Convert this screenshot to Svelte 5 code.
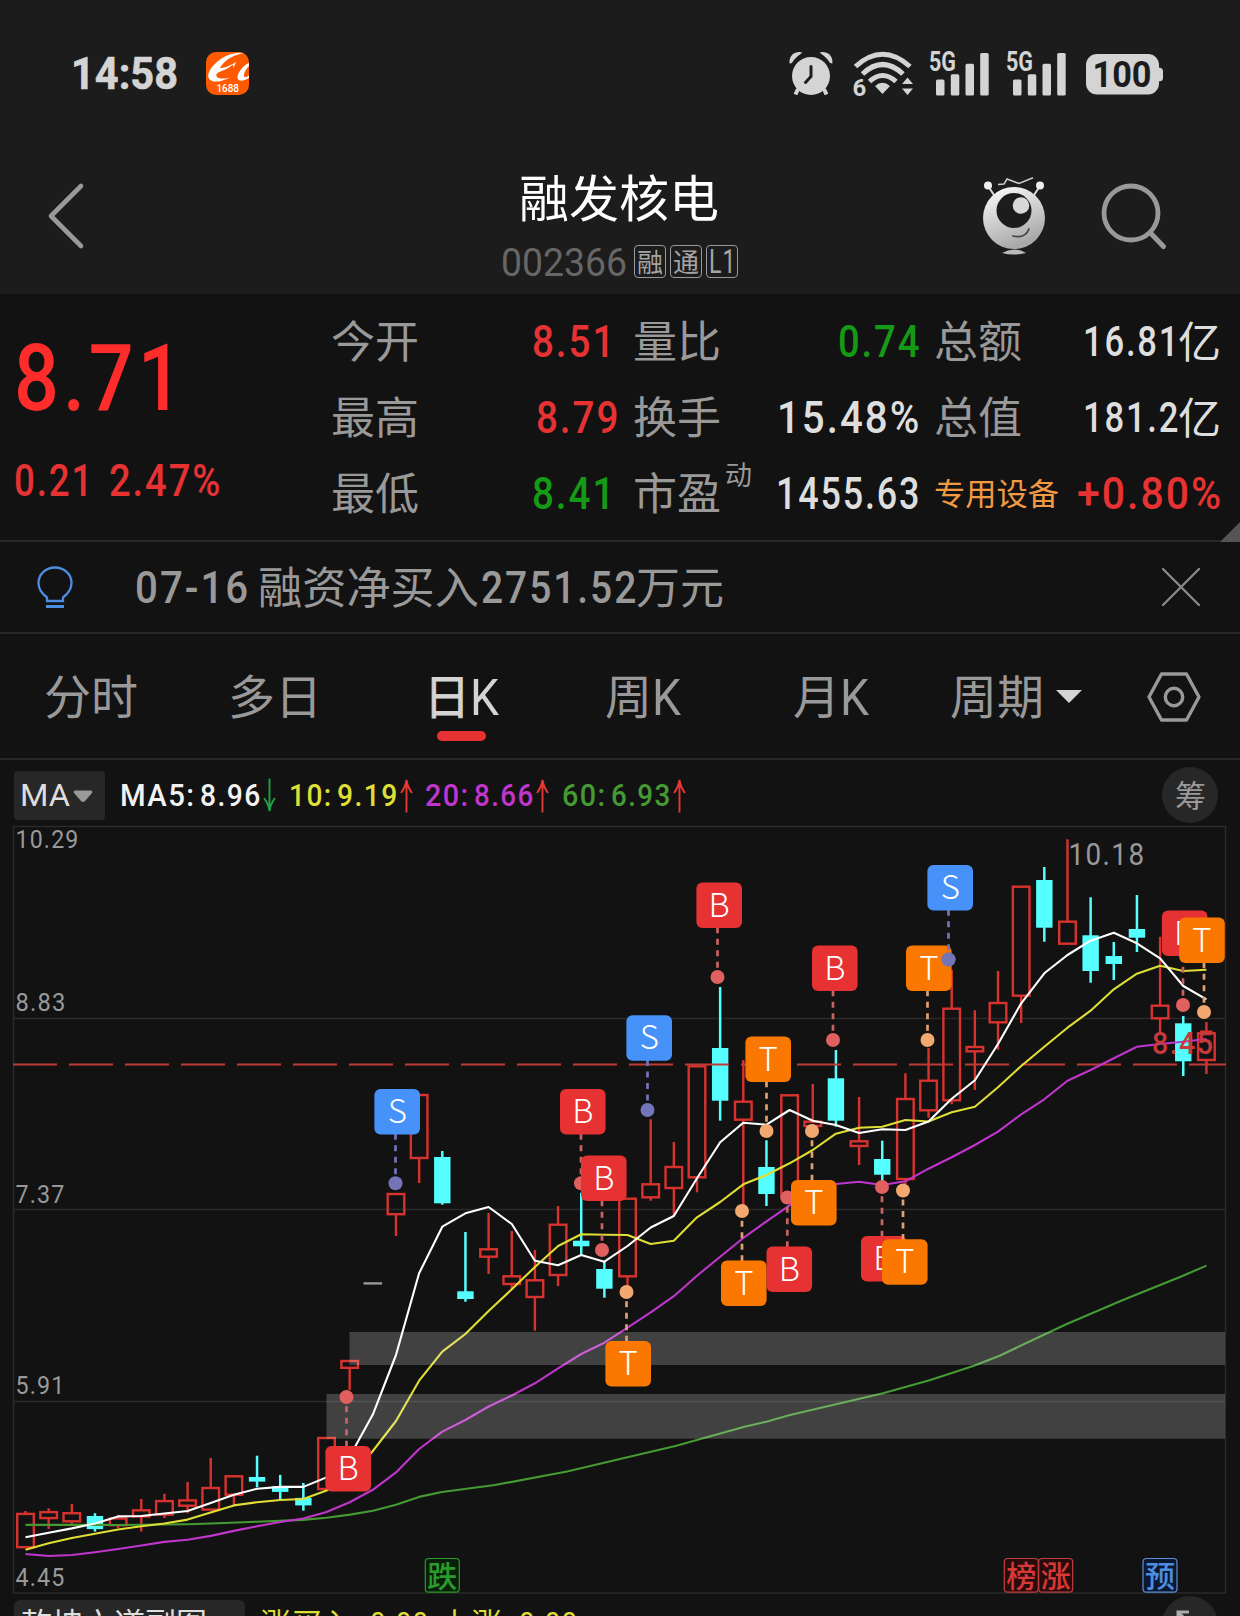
<script>
  const STEP = 23.155;
  const cx = (i) => 25.5 + STEP * i;

  // [direction, high, body top, body bottom, low]
  const candles = [
    ['u', 1511, 1513.9, 1547.2, 1547.2], ['u', 1508.2, 1512.1, 1518.1, 1529.1], ['u', 1504, 1513.2, 1521.3, 1523.8],
    ['d', 1513.2, 1516, 1529.1, 1531.6], ['u', 1515, 1518.5, 1525.2, 1528], ['u', 1499, 1510.3, 1516.4, 1531.6],
    ['u', 1493.7, 1501.1, 1514.6, 1518.1], ['u', 1482, 1500.4, 1505.7, 1513.2], ['u', 1457.9, 1488, 1509.6, 1510.3],
    ['u', 1474.9, 1476.3, 1494.7, 1505], ['d', 1455.7, 1477, 1481.6, 1487.3], ['d', 1474.9, 1486.2, 1491.9, 1500.8],
    ['d', 1483, 1497.9, 1505.4, 1510.7], ['u', 1438, 1438, 1489, 1489], ['u', 1361, 1361, 1367.8, 1390],
    ['f', 1283.4, 1283.4, 1283.4, 1283.4], ['u', 1194, 1194, 1214.2, 1236], ['u', 1095, 1095, 1158, 1183],
    ['d', 1151, 1157, 1203.3, 1204.7], ['d', 1232, 1291.3, 1299, 1301.7], ['u', 1213, 1249.3, 1256.7, 1274],
    ['u', 1231, 1276.3, 1284, 1290], ['u', 1250, 1280.3, 1297, 1330.7], ['u', 1206, 1224.7, 1275, 1286],
    ['d', 1192.7, 1240.7, 1246.3, 1254.7], ['d', 1262, 1269, 1288.7, 1297.7], ['u', 1198.7, 1198.7, 1276.3, 1287],
    ['u', 1119.3, 1184.3, 1197.3, 1200.7], ['u', 1142, 1167, 1188, 1216], ['u', 1066.3, 1066.3, 1177.3, 1192.3],
    ['d', 987, 1048, 1100.7, 1120.7], ['u', 1060, 1101.7, 1119.7, 1205], ['d', 1140.3, 1167, 1194, 1206],
    ['u', 1095.3, 1095.3, 1196, 1196], ['u', 1084, 1121.7, 1126, 1128], ['d', 1050, 1078.3, 1120.7, 1126.7],
    ['u', 1097, 1141.3, 1146, 1165], ['d', 1140.7, 1159, 1174.7, 1185], ['u', 1073.3, 1099, 1179, 1184],
    ['u', 1048, 1080.7, 1110.3, 1117.7], ['u', 970, 1008.7, 1100.3, 1104.3], ['u', 1010.3, 1047, 1051.3, 1090],
    ['u', 971, 1003, 1022.3, 1049.7], ['u', 886.7, 886.7, 995.7, 1023], ['d', 867, 880, 927.7, 941.7],
    ['u', 839.3, 921.7, 943.7, 943.7], ['d', 897.3, 935.3, 971, 982.7], ['d', 942, 956, 964, 980],
    ['d', 895, 929, 937.7, 952], ['u', 936.7, 1005.7, 1018.3, 1033], ['d', 1016, 1023.3, 1061.3, 1076],
    ['u', 1022, 1033.3, 1060, 1074]
  ];

  const ma5 = [1537.3, 1532.7, 1528.4, 1523.5, 1516.4, 1516, 1513.5, 1511, 1502.9, 1494.7, 1488.7, 1486.9, 1486.9, 1477.4, 1456.5, 1414.6, 1355, 1273.3, 1226.7, 1213.3, 1207, 1224, 1260.7, 1265.3, 1255, 1261.7, 1246, 1227.5, 1216, 1178.3, 1142.3, 1122.7, 1124.7, 1110, 1120.7, 1125, 1133, 1129.3, 1130, 1121.5, 1098.7, 1080.3, 1044, 1003.3, 973.3, 955, 940.7, 932.7, 943.3, 958.3, 986, 999.3];
  const ma10 = [1549.7, 1543.3, 1538, 1533.8, 1529.5, 1526.3, 1523.5, 1519.6, 1512.5, 1505.4, 1502.2, 1500, 1499, 1490.5, 1478, 1451, 1421, 1380.7, 1351.7, 1334, 1311, 1289.3, 1267, 1246, 1234.3, 1234.7, 1235, 1244, 1240.7, 1217.3, 1202, 1184.3, 1175, 1163.3, 1150, 1133.7, 1127.7, 1126.7, 1120, 1121.5, 1112.3, 1106.7, 1087.3, 1066, 1046.7, 1027.7, 1010.7, 989.3, 973.7, 965.7, 971, 969.7];
  const ma20 = [1554, 1556, 1555, 1552.2, 1549, 1545.5, 1541.9, 1539.8, 1535.9, 1530.9, 1526.3, 1522, 1518.5, 1512, 1502.2, 1489.8, 1472.4, 1449, 1431.6, 1420, 1406.5, 1395.5, 1383.3, 1368.3, 1354, 1342.7, 1327.7, 1312.3, 1296.2, 1275.7, 1256.7, 1238, 1221.3, 1205.3, 1190, 1184, 1181.7, 1185, 1181.3, 1168.7, 1157.3, 1145, 1131.7, 1114.3, 1099.3, 1080.7, 1070, 1058.3, 1046.7, 1044, 1041.7, 1039];
  const line = (ys) => ys.map((y, i) => `${cx(i).toFixed(1)},${y}`).join(' ');
  const ma60 = '25.5,1524.9 95,1524.9 118,1525 188,1524.2 211,1523.5 257,1521.7 303,1519.9 326.5,1517.8 350,1514.6 373,1510.7 396,1504.7 419,1496.9 442,1492 495,1485 567,1471.5 620,1459 675.4,1446 744.5,1426.7 766.3,1421.7 790,1415 883,1393.3 930.4,1380 974,1365.7 999.6,1355.7 1066.8,1324 1123,1300 1180,1277 1206.5,1265.6';

  // [letter, badge centre x, badge centre y, dot x, dot y]
  const markers = [
    ['B', 348.2, 1468.8, 346.5, 1397], ['S', 397.2, 1111.7, 395.5, 1183.3], ['B', 582.8, 1111.7, 581, 1183.3],
    ['B', 603.8, 1178.3, 602, 1250], ['T', 628.2, 1363.8, 626.5, 1292], ['S', 649.2, 1038, 647.5, 1110],
    ['B', 719.2, 905.2, 717.5, 977], ['T', 743.8, 1283.3, 742, 1211], ['T', 768.2, 1059.3, 766.5, 1131],
    ['B', 789.3, 1269.2, 787.3, 1197.5], ['T', 813.8, 1202.8, 812, 1131], ['B', 834.8, 968.2, 833, 1040],
    ['B', 883.8, 1258.8, 882, 1187], ['T', 904.8, 1262, 903, 1190.5], ['T', 928.8, 968.2, 927.5, 1040],
    ['S', 950.2, 887.8, 948.5, 959.5], ['B', 1184.7, 933.2, 1183, 1005], ['T', 1202, 940.2, 1204, 1012]
  ];
  const axis = [['10.29', 848, 64], ['8.83', 1010.5, 51], ['7.37', 1203, 50], ['5.91', 1393.7, 50], ['4.45', 1586, 50]];
  const events = [['跌', 425.3, 'green'], ['榜', 1004.3, 'red'], ['涨', 1038.7, 'red'], ['预', 1143, 'blue']];

  // label, value, width, colour, unit, right inset
  const stats = [
    [['今开', '8.51', 82, 'red', '', 5], ['量比', '0.74', 81, 'green', '', 1], ['总额', '16.81', 95, 'lite', '亿']],
    [['最高', '8.79', 82, 'red', '', 1], ['换手', '15.48%', 142, 'lite', '', 1], ['总值', '181.2', 95, 'lite', '亿']],
    [['最低', '8.41', 82, 'green', '', 5], ['市盈', '1455.63', 143, 'lite', '', 1], ['专用设备', '+0.80%', 144, 'red']]
  ];
  const averages = [
    ['MA5:', 74, '8.96', 60, 'c5', false], ['10:', 42, '9.19', 60, 'c10', true],
    ['20:', 43, '8.66', 59, 'c20', true], ['60:', 43, '6.93', 59, 'c60', true]
  ];
  const isHan = (s) => /[\u4e00-\u9fff]/.test(s);
  const TRACK = 0.05;
  const spaced = (s, cls) => /\d/.test(s) && cls !== 'time' && cls !== 'dim';
  const fit = (s, w, size, cls) => (spaced(s, cls) ? w + size * TRACK : w);
</script>

{#snippet t(text, w, size, cls = '')}
  <svg class="t {cls}" width={w} height={isHan(text) ? size : size * 0.711}>
    <text class:digits={spaced(text, cls)} y={isHan(text) ? size * 0.88 : size * 0.711} font-size={size} textLength={fit(text, w, size, cls)} lengthAdjust="spacingAndGlyphs">{text}</text>
  </svg>
{/snippet}

{#snippet signal()}
  <svg class="signal" width="61" height="45" viewBox="0 0 61 45">
    <text x="0" y="18.500" font-size="27" font-weight="700" textLength="27" lengthAdjust="spacingAndGlyphs">5G</text>
    <rect x="7" y="27.5" width="8.5" height="16" rx="1.5" /><rect x="21.8" y="22.3" width="8.5" height="21.2" rx="1.5" />
    <rect x="36.5" y="11.7" width="8.5" height="31.8" rx="1.5" /><rect x="51.2" y="1" width="8.5" height="42.5" rx="1.5" />
  </svg>
{/snippet}

<main>
  <header>
    <div class="status">
      {@render t('14:58', 107, 43.5, 'time')}
      <svg class="app" width="43" height="43" viewBox="0 0 43 43">
        <defs><clipPath id="tile"><rect width="43" height="43" rx="10" /></clipPath></defs>
        <g clip-path="url(#tile)">
          <rect width="43" height="43" fill="#ff5a00" />
          <path d="M38 1C24-1 9 8 3 20C0 28 6 31 15 29L25 25.500C17 27 9 27.500 10.500 22C13 19 21 18 27 12.500L27.500 16L30 10C22 15 17 16 14 16C19 7 28 3 38 1Z" fill="#fff" />
          <path d="M43 11C36 14 31 22 31.500 26C33 31 39 28 43 26V23.500C40 25.500 37.500 26 38 22.500C38.500 19 41 16 43 14Z" fill="#fff" />
          <text x="10.500" y="39.500" font-size="10.800" font-weight="500" textLength="22.500" lengthAdjust="spacingAndGlyphs" fill="#fff">1688</text>
        </g>
      </svg>
      <span class="grow"></span>
      <svg class="alarm" width="44" height="46" viewBox="0 0 44 46">
        <circle cx="22" cy="25" r="19" fill="#d4d4d4" />
        <path d="M9 38L6.500 43.500M35 38L37.500 43.500" class="lg" stroke-width="4" />
        <path d="M.6 12.500C-.5 3 8-.5 13.500 1.500C10 4 5 8 3 12Z M43.400 12.500C44.500 3 36-.5 30.500 1.500C34 4 39 8 41 12Z" fill="#d4d4d4" />
        <path d="M22 15.500V25.500L16.500 31.500" fill="none" stroke="#1c1c1c" stroke-width="3" stroke-linecap="round" />
      </svg>
      <svg class="wifi" width="60" height="46" viewBox="0 0 60 46">
        <path d="M2.500 15.500Q29.500-9 57 15.500M9.500 23Q29.500 4 50 23M16.500 30.500Q29.500 18.500 43 30.500" class="lg" stroke-width="5" />
        <path d="M29.500 43L22 35Q29.500 28.500 37 35Z M54.500 26.500L60 33H49Z M54.500 44L60 37.500H49Z" fill="#d4d4d4" />
        <text x="-.5" y="45" font-size="24" font-weight="700" fill="#d4d4d4" stroke="#1c1c1c" stroke-width="4" paint-order="stroke">6</text>
      </svg>
      {@render signal()}
      {@render signal()}
      <svg class="battery" width="77" height="41" viewBox="0 0 77 41">
        <rect width="73" height="40.500" rx="11" fill="#d4d4d4" /><path d="M72 13.500Q77 13.500 77 17V24Q77 27.500 72 27.500Z" fill="#d4d4d4" />
        <text x="6.500" y="33" font-size="36" font-weight="700" textLength="59" lengthAdjust="spacingAndGlyphs" fill="#1c1c1c">100</text>
      </svg>
    </div>

    <div class="titlebar">
      <svg class="back" width="40" height="66" viewBox="0 0 40 66"><path d="M34 3L4 33L34 63" fill="none" stroke="#999" stroke-width="4.600" stroke-linecap="round" stroke-linejoin="round" /></svg>
      <div class="name">
        {@render t('融发核电', 200, 50, 'white')}
        <div class="code">
          {@render t('002366', 126, 39, 'dim')}
          <span class="badge">{@render t('融', 26, 26)}</span><span class="badge">{@render t('通', 26, 26)}</span><span class="badge">{@render t('L1', 26, 34, 'time0')}</span>
        </div>
      </div>
      <svg class="robot" width="64" height="78" viewBox="0 0 64 78">
        <defs><linearGradient id="skin" x1="0" y1="0" x2=".4" y2="1"><stop offset="0" stop-color="#fff" /><stop offset="1" stop-color="#a9a9a9" /></linearGradient></defs>
        <path d="M6 9L12 18M58 9L52 18" stroke="#ddd" stroke-width="2" />
        <circle cx="6" cy="8.500" r="4" fill="#eee" /><circle cx="58" cy="8.500" r="4" fill="#eee" />
        <path d="M16 7.500L22 7L25 2L37 6.500L51 .8" fill="none" stroke="#ccc" stroke-width="1.500" />
        <circle cx="32" cy="41" r="31" fill="url(#skin)" />
        <circle cx="32" cy="33.500" r="17.500" fill="#1c1c1c" /><circle cx="39" cy="28.500" r="8.300" fill="#d8d8d8" />
        <path d="M31 59Q43 62 47 52" fill="none" stroke="#444" stroke-width="1.800" stroke-linecap="round" />
        <path d="M20 76Q32 69 44 76Q32 79 20 76Z" fill="#bbb" />
      </svg>
      <svg class="search" width="66" height="66" viewBox="0 0 66 66"><circle cx="30" cy="30" r="27" fill="none" stroke="#999" stroke-width="4.800" /><path d="M49.500 50L62.500 63.500" stroke="#999" stroke-width="5" stroke-linecap="round" /></svg>
    </div>
  </header>

  <section class="quote">
    <div class="price">
      {@render t('8.71', 168, 92, 'hot')}
      <div class="change">{@render t('0.21', 78, 43.5, 'red')}{@render t('2.47%', 111, 43.5, 'red')}</div>
    </div>
    <div class="stats">
      {#each stats as row}
        {#each row as [label, value, w, color, unit, inset]}
          <div class="stat">
            {#if label === '专用设备'}{@render t(label, 125, 31, 'amber')}{:else}{@render t(label, 88, 44, 'label')}{/if}
            {#if label === '市盈'}<sup>{@render t('动', 27, 27, 'label')}</sup>{/if}
            <span class="grow"></span>
            {@render t(value, w, unit ? 42.5 : 45, color)}
            {#if unit}{@render t(unit, 43, 43, 'unit')}{/if}
            {#if inset}<span class="inset" style:width="{inset}px"></span>{/if}
          </div>
        {/each}
      {/each}
    </div>
    <span class="corner"></span>
  </section>

  <section class="news">
    <svg class="bulb" width="36" height="44" viewBox="0 0 36 44"><path d="M10 35V31.500C4 27 1.500 22 1.500 17C1.500 8 9 1.500 18 1.500S34.500 8 34.500 17C34.500 22 32 27 26 31.500V35Z" fill="none" stroke="#4c8de0" stroke-width="2.300" /><path d="M9 40.500H27" stroke="#4c8de0" stroke-width="3" /></svg>
    <p>{@render t('07-16', 113, 45, 'label mid')}{@render t('融资净买入', 221, 44, 'label han')}{@render t('2751.52', 155, 45, 'label mid')}{@render t('万元', 88, 44, 'label')}</p>
    <svg width="38" height="38" viewBox="0 0 38 38"><path d="M1 1L37 37M37 1L1 37" stroke="#8a8a8a" stroke-width="2.300" stroke-linecap="round" /></svg>
  </section>

  <nav>
    <div class="tab">{@render t('分时', 94, 47, 'label')}</div>
    <div class="tab">{@render t('多日', 94, 47, 'label')}</div>
    <div class="tab active">{@render t('日', 46, 47, 'heavy')}{@render t('K', 29, 50)}</div>
    <div class="tab">{@render t('周', 47, 47, 'label')}{@render t('K', 29, 50, 'label')}</div>
    <div class="tab">{@render t('月', 47, 47, 'label')}{@render t('K', 29, 50, 'label')}</div>
    <div class="tab">{@render t('周期', 94, 47, 'label')}<b class="caret"></b></div>
    <div class="tab hex"><svg width="54" height="50" viewBox="0 0 54 50"><path d="M14.500 2H39.500L52 25L39.500 48H14.500L2 25Z" fill="none" stroke="#999" stroke-width="3.400" stroke-linejoin="round" /><circle cx="27" cy="25" r="8.700" fill="none" stroke="#999" stroke-width="3.400" /></svg></div>
  </nav>

  <section class="legend">
    <div class="picker">{@render t('MA', 50, 31, 'lite')}<svg width="22" height="14" viewBox="0 0 22 14"><path d="M3 1.500H19Q21 2 20 4L13 12Q11 14 9 12L2 4Q1 2 3 1.500Z" fill="#999" /></svg></div>
    {#each averages as [name, nw, value, vw, cls, up]}
      <div class="avg {cls}">
        {@render t(name, nw, 31.5)}{@render t(value, vw, 31.5)}
        <svg class:up class="arrow" width="13" height="35" viewBox="0 0 13 35"><path d="M6.500 34.500V2M1 15Q5.500 9 6.500 2Q7.500 9 12 15" fill="none" stroke-width="1.900" /></svg>
      </div>
    {/each}
    <span class="grow"></span>
    <div class="chips">{@render t('筹', 31, 31, 'label')}</div>
  </section>

  <svg class="chart" width="1240" height="772" viewBox="0 823 1240 772">
    <g class="grid">
      <rect x="13.500" y="826.500" width="1212" height="766.500" />
      <path d="M14 1018.500H1225M14 1209.500H1225M14 1401.500H1225" />
    </g>
    {#each candles as [dir, hi, top, bottom, lo], i}
      {@const x = cx(i)}
      {#if dir === 'f'}
        <path class="flat" d="M{x - 9.3} {hi}H{x + 9.3}" />
      {:else if dir === 'd'}
        <path class="down" d="M{x} {hi}V{lo}" /><rect class="fall" x={x - 8.2} y={top} width="16.400" height={bottom - top} />
      {:else}
        <path class="rise" d="M{x} {hi}V{top}M{x} {bottom}V{lo}" /><rect class="rise" x={x - 8.3} y={top} width="16.600" height={bottom - top} />
      {/if}
    {/each}
    <rect x="1200" y="1030.500" width="12.500" height="4" fill="#d8322f" />
    <path class="limit" d="M13 1064.500H1226" />
    <polyline class="ma" points={ma60} stroke="#459a33" />
    <polyline class="ma" points={line(ma20)} stroke="#c035cc" />
    <polyline class="ma" points={line(ma10)} stroke="#dede35" />
    <polyline class="ma" points={line(ma5)} stroke="#fff" />
    <rect class="gap" x="349.500" y="1332" width="875.500" height="33" />
    <rect class="gap" x="326.500" y="1394" width="898.500" height="44.700" />
    {#each axis as [label, y, w]}<text class="tick digits" x="15.500" {y} font-size="26.500" textLength={w} lengthAdjust="spacingAndGlyphs">{label}</text>{/each}
    <text class="tick digits" x="1068.500" y="865" font-size="31.500" textLength="77" lengthAdjust="spacingAndGlyphs">10.18</text>
    <text class="last digits" x="1152" y="1054" font-size="31.500" textLength="62.500" lengthAdjust="spacingAndGlyphs">8.45</text>
    {#each markers as [letter, bx, by, dx, dy]}
      <g class="mark {letter}">
        <path d="M{dx} {by > dy ? by - 22 : by + 22}V{dy}" />
        <circle cx={dx} cy={dy} r="7" />
        <rect x={bx - 22.8} y={by - 22.8} width="45.600" height="45.600" rx="6" />
        <text x={bx} y={by + 11.4} font-size="33">{letter}</text>
      </g>
    {/each}
    <circle cx="948.500" cy="959.500" r="7" fill="#7474b8" />
    {#each events as [label, x, cls]}
      <g class="event {cls}"><rect {x} y="1558.500" width="34" height="33.700" rx="3.500" /><text x={x + 17} y="1586.500" font-size="30">{label}</text></g>
    {/each}
  </svg>

  <footer>
    <div class="sub">{@render t('乾坤六道副图', 186, 31, 'lite')}</div>
    <div class="signals">{@render t('涨买入', 93, 31, 'c10')}{@render t(':', 9, 31, 'c10')}{@render t('0.00', 58, 31, 'c10 zero')}{@render t('上涨', 62, 31, 'c10 next')}{@render t(':', 9, 31, 'c10')}{@render t('0.00', 58, 31, 'c10 zero')}</div>
    <div class="expand"><svg width="28" height="28" viewBox="0 0 28 28"><path d="M2 13V2H13M2 2L12 12M26 15V26H15M26 26L16 16" fill="none" stroke="#aaa" stroke-width="3" /></svg></div>
  </footer>
</main>

<style>
  :global(body) { margin: 0; background: #121212; }
  main { width: 1240px; height: 1616px; overflow: hidden; background: #121212; font-family: Roboto, 'Noto Sans CJK SC', sans-serif; color: #d4d4d4; }
  svg { display: block; flex: none; overflow: visible; }
  text { font-family: Roboto, 'Noto Sans CJK SC', sans-serif; }
  .digits { letter-spacing: .05em; }
  .t { fill: currentColor; font-weight: 400; }
  .grow { flex: 1; }
  .label { color: #999; }
  .mid { font-weight: 500; }
  .lite { color: #dedede; font-weight: 500; }
  .unit { color: #dedede; }
  .white { color: #fff; }
  .dim { color: #666; }
  .red { color: #e63232; font-weight: 500; }
  .hot { color: #ff2c2c; font-weight: 500; }
  .green { color: #159a15; font-weight: 500; }
  .amber { color: #f19a43; }
  .heavy { stroke: currentColor; stroke-width: .8; }

  header { height: 294px; background: #1c1c1c; }
  .status { display: flex; align-items: center; height: 147px; padding: 0 77px 1px 71px; }
  .time { font-weight: 700; color: #d4d4d4; stroke: currentColor; stroke-width: .6; }
  .app { margin-left: 28px; }
  .alarm { margin: 1px 20px 0 0; }
  .wifi { margin: 1px 16px 0 0; }
  .signal { fill: #d4d4d4; margin: 1px 16px 0 0; }
  .battery { margin: 2px 0 0 3px; }
  .lg { fill: none; stroke: #d4d4d4; stroke-linecap: butt; }
  .titlebar { display: flex; align-items: flex-start; padding: 25px 73px 0 46.5px; height: 121px; }
  .back { margin-top: 9.500px; }
  .name { display: flex; flex-direction: column; align-items: center; width: 242px; margin: 0 0 0 412px; gap: 22px; }
  .code { display: flex; align-items: center; gap: 4px; height: 33px; }
  .badge { display: flex; align-items: center; justify-content: center; box-sizing: border-box; width: 32px; height: 33px; border: 1.5px solid #999; border-radius: 4px; color: #a5a5a5; }
  .code .dim { margin-right: 3px; }
  .robot { margin: 4px 0 0 242px; }
  .search { margin: 9.500px 0 0 55.500px; }

  .quote { position: relative; display: flex; height: 246px; border-bottom: 2px solid #272727; }
  .price { width: 330.500px; box-sizing: border-box; padding: 51px 0 0 14px; }
  .change { display: flex; gap: 17px; margin-top: 54.500px; }
  .stats { display: grid; grid-template-columns: 288px 287px 287px; grid-auto-rows: 76px; column-gap: 14px; padding-top: 9px; }
  .stat { display: flex; align-items: center; }
  sup { margin: -38px 0 0 4px; line-height: 0; }
  .inset { flex: none; }
  .corner { position: absolute; right: 0; bottom: -2px; border: 10px solid; border-color: transparent #555 #555 transparent; }

  .news { display: flex; align-items: center; box-sizing: border-box; height: 92px; padding: 0 40px 0 36.500px; border-bottom: 2px solid #272727; }
  .bulb { margin-top: 1px; }
  .news p { display: flex; align-items: center; flex: 1; margin: 0 0 0 62.500px; }
  .news .han { margin: 0 2px 0 10px; }

  nav { display: grid; grid-template-columns: 181px 187px 187px 176px 200px 170px 139px; height: 124px; border-bottom: 2px solid #272727; }
  .tab { display: flex; align-items: center; justify-content: center; padding-top: 1px; }
  .tab.active { position: relative; color: #d4d4d4; font-weight: 500; }
  .tab.active::after { content: ''; position: absolute; top: 97px; left: 69px; width: 49px; height: 10px; border-radius: 5px; background: #e63232; }
  .hex { padding-left: 6px; }
  .caret { border: 13px solid transparent; border-top-color: #d4d4d4; border-bottom: 0; margin-left: 12px; }

  .legend { display: flex; align-items: center; box-sizing: border-box; height: 63px; padding: 8px 22px 0 14px; }
  .picker { display: flex; align-items: center; gap: 2px; width: 91px; height: 49px; padding-left: 6px; box-sizing: border-box; border-radius: 4px; background: #272727; margin-right: 15px; }
  .picker .lite { font-weight: 400; }
  .avg { display: flex; align-items: center; font-weight: 500; gap: 6px; margin-right: 12.500px; }
  .arrow { margin-left: -3px; stroke: #1fa04a; transform: rotate(180deg); }
  .arrow.up { stroke: #e53935; transform: none; }
  .avg .t { font-weight: 500; }
  .c5 { color: #f2f2f2; }
  .c10 { color: #dede35; }
  .c20 { color: #c035cc; }
  .c60 { color: #459a33; }
  .chips { display: flex; align-items: center; justify-content: center; width: 56px; height: 56px; margin-top: -1px; border-radius: 50%; background: #272727; }

  .grid rect, .grid path { fill: none; stroke: #2a2a2a; stroke-width: 1.5; }
  .rise { fill: none; stroke: #d8322f; stroke-width: 2.4; }
  .down { stroke: #55ffff; stroke-width: 2.5; }
  .fall { fill: #55ffff; }
  .flat { stroke: #999; stroke-width: 2.4; }
  .limit { stroke: #c03a35; stroke-width: 2.2; stroke-dasharray: 44 12; }
  .ma { fill: none; stroke-width: 2.1; stroke-linejoin: round; }
  .gap { fill: #fff; fill-opacity: .2; }
  .tick { fill: #999; }
  .last { fill: #c8393b; font-weight: 500; }
  .mark text { fill: #fff; text-anchor: middle; font-weight: 300; font-family: 'Noto Sans CJK SC', Roboto, sans-serif; }
  .mark path { stroke-width: 2.7; stroke-dasharray: 6 5.500; fill: none; }
  .B rect { fill: #e63232; } .B circle { fill: #e06060; } .B path { stroke: #c86464; }
  .S rect { fill: #4692f8; } .S circle { fill: #7474b8; } .S path { stroke: #7474b8; }
  .T rect { fill: #fa7800; } .T circle { fill: #f3a870; } .T path { stroke: #e0a070; }
  .event text { text-anchor: middle; stroke: none; font-weight: 500; }
  .event rect { stroke-width: 1.2; }
  .event.green text { fill: #2a9a2a; } .event.green rect { fill: #0a1f0a; stroke: #2a9a2a; }
  .event.red text { fill: #d83838; } .event.red rect { fill: #280c0c; stroke: #c04040; }
  .event.blue text { fill: #4c8de0; } .event.blue rect { fill: #0c1830; stroke: #5b8fd8; }

  footer { display: flex; align-items: flex-start; height: 21px; padding: 5px 22px 0 14px; }
  .sub { box-sizing: border-box; width: 231px; height: 50px; padding: 8px 0 0 7px; border-radius: 6px 6px 0 0; background: #272727; flex: none; }
  .sub .lite { font-weight: 400; }
  .signals { display: flex; align-items: center; flex: 1; padding: 8px 0 0 15px; }
  .zero { margin-left: 8px; }
  .next { margin-left: 12px; }
  .expand { display: flex; align-items: center; justify-content: center; width: 56px; height: 56px; margin-top: -4px; border-radius: 50%; background: #272727; }
</style>
